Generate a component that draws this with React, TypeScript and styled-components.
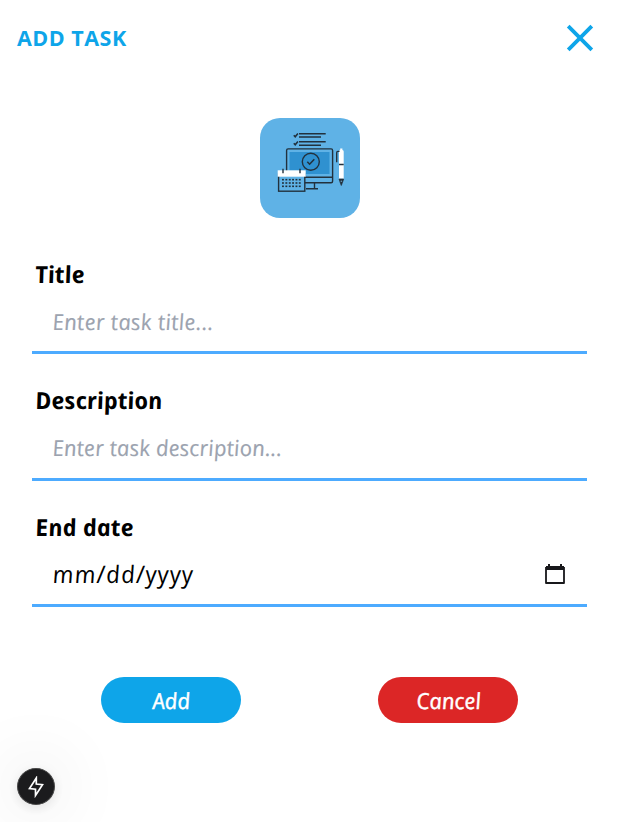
import React from "react";
import styled, { createGlobalStyle } from "styled-components";

const GlobalStyle = createGlobalStyle`
  *, *::before, *::after { box-sizing: border-box; }
  body { margin: 0; background: #fff; overflow: hidden; }
  input, button { font: inherit; border: 0; background: none; padding: 0; margin: 0; outline: none; }
`;

const Page = styled.main`
  display: flex;
  flex-direction: column;
  height: 822px;
  font-family: "Open Sans", "Noto Sans", sans-serif;
  color: #000;
`;

const Header = styled.header`
  display: flex;
  align-items: center;
  justify-content: space-between;
  height: 76px;
  padding: 0 20px 0 17px;
`;

const Heading = styled.h1`
  margin: 0;
  font-size: 21.5px;
  line-height: 30px;
  font-weight: 700;
  letter-spacing: 0.5px;
  color: #0ea5e9;
`;

const CloseButton = styled.button`
  display: flex;
  color: #0ea5e9;
`;

const Badge = styled.div`
  flex: none;
  width: 100px;
  height: 100px;
  margin: 42px auto 0 260px;
  border-radius: 20px;
  background: #5fb2e6;
  svg { display: block; }
`;

const Form = styled.form`
  display: flex;
  flex-direction: column;
  padding: 37px 32px 0;
`;

const Field = styled.div<{ $height: number }>`
  display: flex;
  flex-direction: column;
  height: ${(p) => p.$height}px;
`;

/* Italic letterforms stood almost upright give the handwritten look. */
const Label = styled.label<{ $spacing: number }>`
  align-self: flex-start;
  margin-left: 3px;
  font-size: 23.5px;
  line-height: 38px;
  font-weight: 700;
  font-style: italic;
  letter-spacing: ${(p) => p.$spacing}px;
  transform: skewX(10deg);
`;

const InputRow = styled.div<{ $height: number; $lift?: number }>`
  display: flex;
  align-items: center;
  height: ${(p) => p.$height}px;
  padding: 0 21px ${(p) => p.$lift ?? 0}px 19.5px;
  border-bottom: 3px solid #4dabff;
`;

const Input = styled.input<{ $spacing: number; $date?: boolean }>`
  flex: 1;
  min-width: 0;
  height: 40px;
  font-size: ${(p) => (p.$date ? 24 : 22)}px;
  font-style: italic;
  letter-spacing: ${(p) => p.$spacing}px;
  transform: skewX(8deg);
  &::placeholder {
    color: ${(p) => (p.$date ? "#000" : "#9ca3af")};
    opacity: 1;
    -webkit-text-stroke: ${(p) => (p.$date ? "0" : "0.15px #9ca3af")};
  }
`;

const CalendarIcon = styled.svg`
  flex: none;
  margin-top: 2px;
`;

const Actions = styled.div`
  display: flex;
  justify-content: space-around;
  margin-top: 70px;
`;

const Pill = styled.button<{ $color: string }>`
  display: flex;
  align-items: center;
  justify-content: center;
  width: 140px;
  height: 46px;
  border-radius: 23px;
  background: ${(p) => p.$color};
  color: #fff;
  font-size: 22px;
  font-style: italic;
  -webkit-text-stroke: 0.4px #fff;
  span {
    margin-top: -1px;
    transform: skewX(8deg);
  }
`;

const DevIndicator = styled.div`
  position: fixed;
  left: 17px;
  bottom: 17px;
  display: flex;
  align-items: center;
  justify-content: center;
  width: 38px;
  height: 37px;
  border-radius: 50%;
  border: 1px solid #4a4a4a;
  background: #1b1b1d;
  box-shadow: 0 0 70px rgba(0, 0, 0, 0.18), 0 3px 12px rgba(0, 0, 0, 0.1);
`;

function TaskIllustration() {
  const columns = [23, 26.4, 29.8, 33.1, 36.5, 39.8];
  const rows = [61.7, 65, 68.3];
  return (
    <svg width="100" height="100" viewBox="0 0 100 100" fill="none" stroke="#22313d" strokeWidth="1.4">
      <path d="M39 15.8h26.7M39 19h22M39 23.8h26.7M39 27.2h22" />
      <path d="M33.8 17.2l1.4 1.6 2.7-3.4M33.8 25.2l1.4 1.6 2.7-3.4" strokeWidth="1.6" />
      <rect x="26.6" y="30.9" width="46" height="33.8" rx="1.5" />
      <rect x="29.5" y="34" width="40" height="22" fill="#2f91d0" stroke="none" />
      <path d="M27 59.2h45.5M54.5 65v5.5M46 70.8h12" />
      <circle cx="50.8" cy="43.7" r="8.5" />
      <path d="M47.3 43.8l2.3 2.4 4.7-5" strokeWidth="1.6" />
      <rect x="18.6" y="56" width="26.2" height="17.2" fill="#5fb2e6" />
      <rect x="17.7" y="52.3" width="28" height="6.4" fill="#fff" stroke="none" />
      <path d="M23 50.7v4.6M40 50.7v4.6" />
      {rows.map((y) =>
        columns.map((x) => (
          <rect key={`${x}-${y}`} x={x - 1} y={y - 0.8} width="1.9" height="1.6" fill="#22313d" stroke="none" />
        ))
      )}
      <path d="M79 33.5q0-1.5 1.2-1.5v-1.6h2.2v1.6q1.3 0 1.3 1.5v27.2H79z" fill="#fff" stroke="none" />
      <path d="M79.5 33.4h-1.6q-1.2 0-1.2 1.4v9.4M79 46.5h4.7" />
      <path d="M79 61h4.7l-1.6 4.5-.8 2-.8-2z" fill="#22313d" strokeWidth=".7" />
      <circle cx="81.3" cy="63.3" r=".8" fill="#6b9fc2" stroke="none" />
    </svg>
  );
}

function App() {
  return (
    <Page>
      <GlobalStyle />
      <Header>
        <Heading>ADD TASK</Heading>
        <CloseButton type="button" aria-label="Close">
          <svg width="38" height="38" viewBox="0 0 38 38" fill="none" stroke="currentColor" strokeWidth="3.8">
            <path d="M7.2 7.2l23.6 23.6M30.8 7.2L7.2 30.8" />
          </svg>
        </CloseButton>
      </Header>
      <Badge>
        <TaskIllustration />
      </Badge>
      <Form onSubmit={(e) => e.preventDefault()}>
        <Field $height={126}>
          <Label htmlFor="title" $spacing={0}>Title</Label>
          <InputRow $height={61} $lift={3}>
            <Input id="title" placeholder="Enter task title..." $spacing={0.28} />
          </InputRow>
        </Field>
        <Field $height={127}>
          <Label htmlFor="description" $spacing={0}>Description</Label>
          <InputRow $height={62} $lift={4}>
            <Input id="description" placeholder="Enter task description..." $spacing={0.1} />
          </InputRow>
        </Field>
        <Field $height={99}>
          <Label htmlFor="date" $spacing={0.1}>End date</Label>
          <InputRow $height={61} $lift={5}>
            <Input id="date" placeholder="mm/dd/yyyy" $spacing={1.1} $date />
            <CalendarIcon width="22" height="22" viewBox="0 0 22 22" fill="none">
              <path d="M2 3h18v4H2z" fill="#18181b" />
              <path d="M5 1v3M17 1v3" stroke="#18181b" strokeWidth="2" />
              <path d="M2 4v16h18V4" stroke="#18181b" strokeWidth="1.8" strokeLinejoin="round" />
            </CalendarIcon>
          </InputRow>
        </Field>
        <Actions>
          <Pill type="submit" $color="#0ea5e9"><span>Add</span></Pill>
          <Pill type="button" $color="#dc2626"><span>Cancel</span></Pill>
        </Actions>
      </Form>
      <DevIndicator>
        <svg width="22" height="22" viewBox="0 0 22 22" fill="none" stroke="#fff" strokeWidth="1.7">
          <path d="M11.3 2v6l6.2.7-7 10.8v-6.3l-6-.6z" />
        </svg>
      </DevIndicator>
    </Page>
  );
}

export default App;
